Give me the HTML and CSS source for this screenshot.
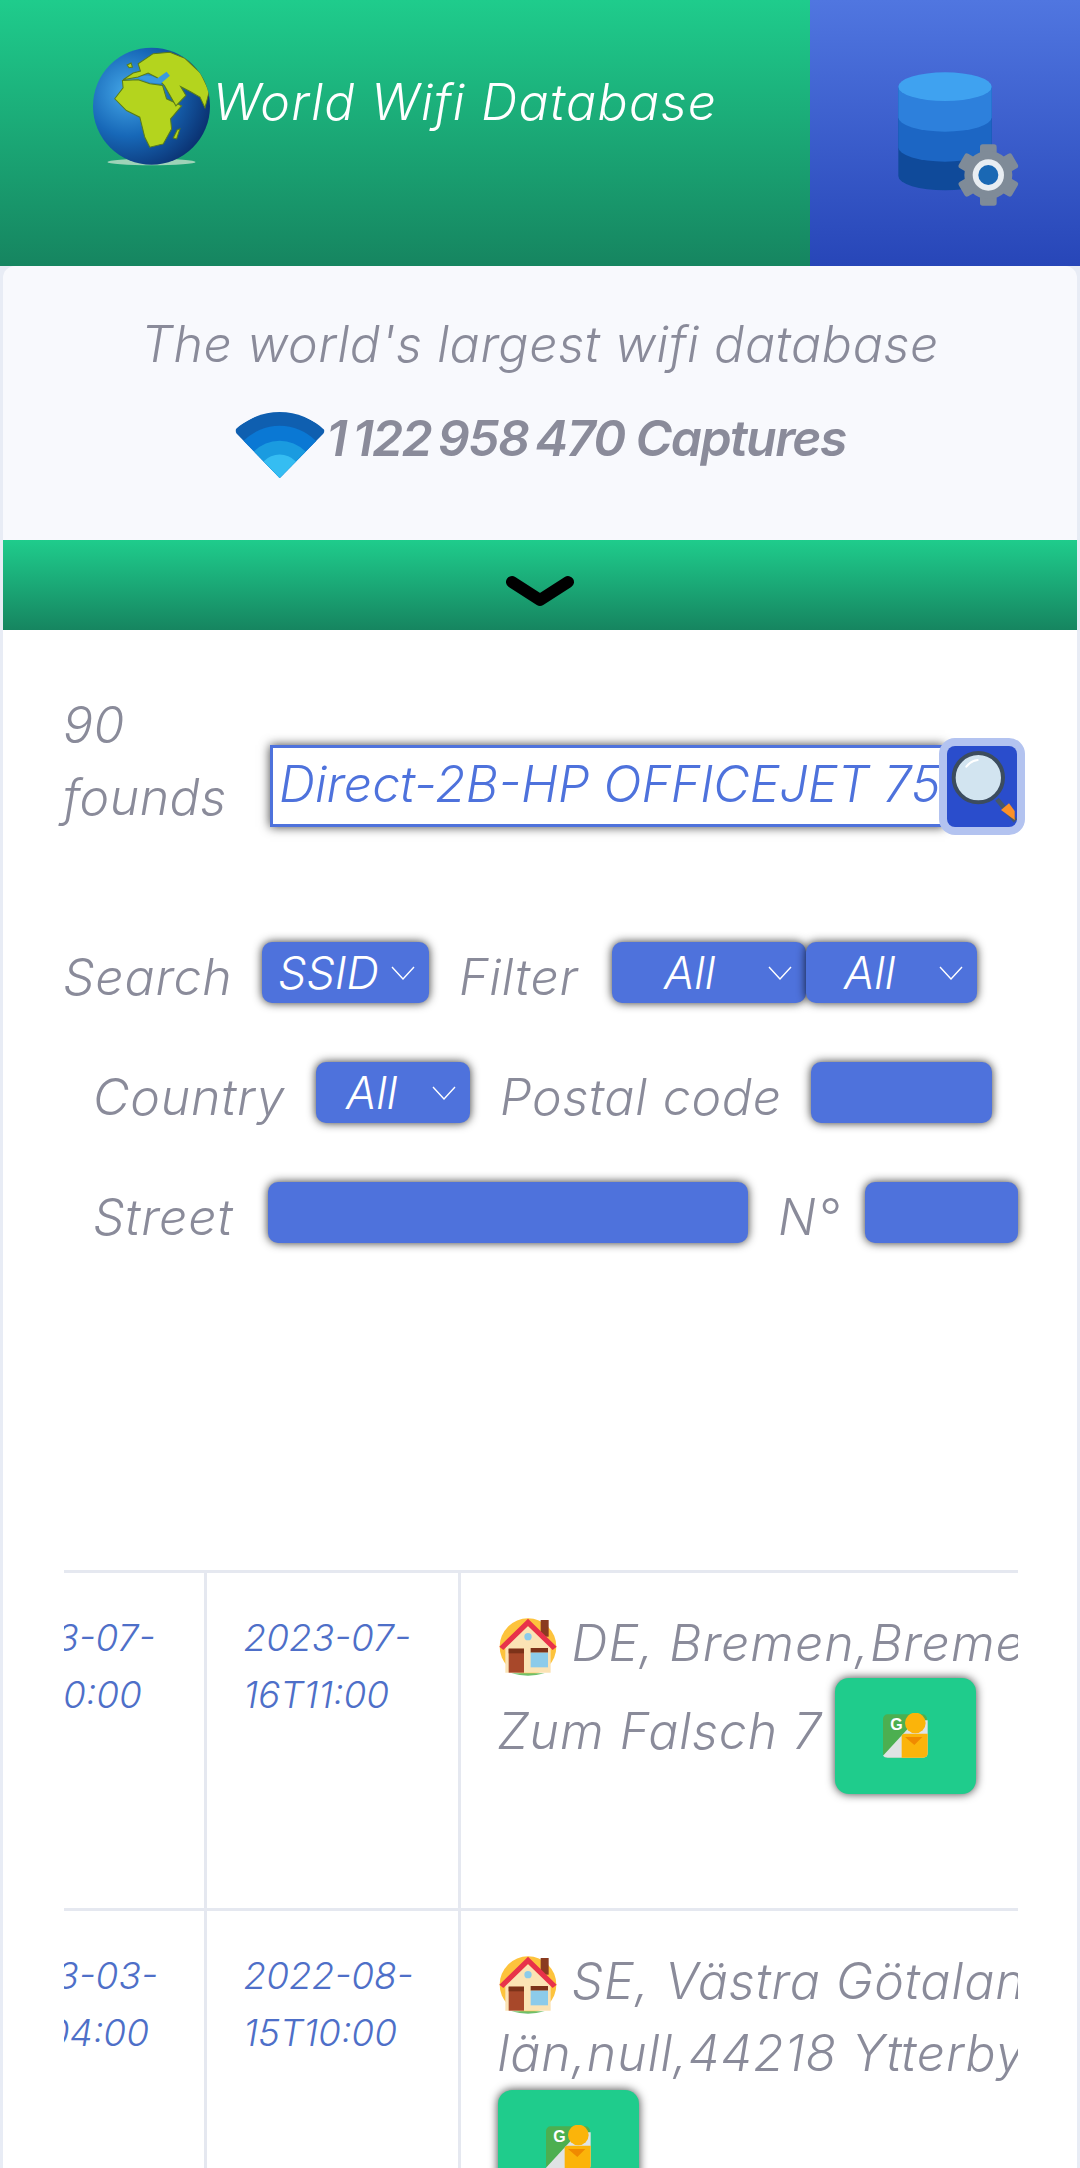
FILE: index.html
```html
<!DOCTYPE html>
<html lang="en">
<head>
  <meta charset="UTF-8">
  <meta name="viewport" content="width=device-width, initial-scale=1.0">
  <title>World Wifi Database</title>
  <link rel="stylesheet" href="styles.css">
</head>
<body>
  <!-- shared icons -->
  <svg class="defs" width="0" height="0">
    <symbol id="house" viewBox="0 0 180 180">
      <circle cx="90" cy="92" r="85" fill="#fdc33c"/>
      <rect x="128" y="12" width="24" height="50" fill="#8a3b20"/>
      <path d="M90 30 L158 92 V170 H22 V92 Z" fill="#fbe3b4"/>
      <path d="M4 92 L90 8 L176 92 L164 102 L90 30 L16 102 Z" fill="#e8324a"/>
      <circle cx="90" cy="62" r="11" fill="#8ccbea"/>
      <rect x="32" y="98" width="46" height="72" fill="#a8482a"/>
      <rect x="32" y="98" width="46" height="14" fill="#7c3219"/>
      <rect x="98" y="96" width="52" height="14" fill="#7c3219"/>
      <rect x="98" y="110" width="52" height="44" fill="#8ccbea"/>
      <path d="M40 172 Q90 186 140 172 Z" fill="#6fbf6a"/>
    </symbol>
    <symbol id="maps" viewBox="0 0 135 138">
      <rect x="0" y="4" width="132" height="130" rx="14" fill="#4caf50"/>
      <path d="M0 128 L98 22 H134 V120 Q134 134 120 134 H14 Q4 134 0 128 Z" fill="#dfe3e4"/>
      <path d="M56 134 V70 Q56 62 66 62 H134 V120 Q134 134 120 134 Z" fill="#fbb40a"/>
      <path d="M66 72 H118 L94 96 Z" fill="#f08a00"/>
      <circle cx="97" cy="30" r="31" fill="#fbb40a"/>
      <text x="22" y="50" class="maps-g">G</text>
    </symbol>
  </svg>

  <div class="page">
    <header class="top">
      <div class="brand">
        <svg class="globe" viewBox="70 50 350 356">
          <defs>
            <radialGradient id="sea" cx="30%" cy="38%" r="75%">
              <stop offset="0" stop-color="#45a8e8"/>
              <stop offset=".5" stop-color="#1768b8"/>
              <stop offset="1" stop-color="#0a2f6e"/>
            </radialGradient>
            <clipPath id="ball"><circle cx="245" cy="227" r="175"/></clipPath>
          </defs>
          <ellipse cx="245" cy="394" rx="132" ry="10" fill="#9ed3b8"/>
          <circle cx="245" cy="227" r="175" fill="url(#sea)"/>
          <g clip-path="url(#ball)" fill="#b4d41e" stroke="#5a7c18" stroke-width="3">
            <path d="M135 205 L160 172 L158 150 L205 148 L240 160 L278 165 L290 205 L335 226 L302 265 L305 295 L280 340 L240 350 L225 320 L210 260 L170 240 Z"/>
            <path d="M160 148 L190 128 L212 122 L205 100 L250 70 L300 66 L345 84 L392 128 L418 182 L405 232 L390 200 L362 184 L332 168 L348 195 L318 226 L284 166 L262 142 L235 128 L205 140 Z"/>
            <path d="M322 298 L330 295 L320 325 L310 322 Z"/>
            <path d="M172 104 L184 98 L188 110 L178 112 Z"/>
          </g>
          <path d="M205 142 Q235 128 262 144 L290 124 L300 136 L272 160 L240 156 Z" fill="#3a9ae0"/>
        </svg>
        <h1 class="brand-name">World Wifi Database</h1>
      </div>
      <div class="admin">
        <svg class="db-icon" viewBox="0 0 540 510">
          <path d="M85 110 V378 A140 43 0 0 0 365 378 V110 Z" fill="#0f4a9a"/>
          <path d="M85 110 V292 A140 43 0 0 0 365 292 V110 Z" fill="#1c66c4"/>
          <path d="M85 110 V202 A140 43 0 0 0 365 202 V110 Z" fill="#2d80dc"/>
          <ellipse cx="225" cy="110" rx="140" ry="43" fill="#3fa2f0"/>
          <g fill="#7f8b98">
            <rect x="330" y="283" width="50" height="184" rx="8"/>
            <rect x="330" y="283" width="50" height="184" rx="8" transform="rotate(60 355 375)"/>
            <rect x="330" y="283" width="50" height="184" rx="8" transform="rotate(120 355 375)"/>
            <circle cx="355" cy="375" r="72"/>
          </g>
          <circle cx="355" cy="375" r="47" fill="#e8edf2"/>
          <circle cx="355" cy="375" r="30" fill="#1a68b4"/>
        </svg>
      </div>
    </header>

    <section class="intro">
      <p class="tagline">The world's largest wifi database</p>
      <p class="captures">
        <svg class="wifi-icon" viewBox="45 65 276 206">
          <defs>
            <clipPath id="sector"><path d="M182 268 L52 134 Q44 124 54 112 L182 40 L312 112 Q322 124 314 134 Z"/></clipPath>
          </defs>
          <g clip-path="url(#sector)">
            <circle cx="182" cy="265" r="197" fill="#0f5fb0"/>
            <circle cx="182" cy="265" r="155" fill="#0a78d4"/>
            <circle cx="182" cy="265" r="110" fill="#1a9be0"/>
            <circle cx="182" cy="265" r="68" fill="#35bdf2"/>
          </g>
        </svg>
        <span>1&#8201;122&#8201;958&#8201;470 Captures</span>
      </p>
    </section>

    <div class="toggle">
      <svg class="chevron" viewBox="0 0 70 32"><path d="M7 7 L35 25 L63 7" fill="none" stroke="#000" stroke-width="12" stroke-linecap="round" stroke-linejoin="round"/></svg>
    </div>

    <main class="content">
      <div class="search-row">
        <div class="count">90<br>founds</div>
        <div class="search-input">Direct-2B-HP OFFICEJET 75</div>
        <button class="search-btn">
          <svg viewBox="0 0 210 243">
            <path d="M150 160 L205 225" stroke="#47586a" stroke-width="14"/>
            <path d="M162 192 L186 172 L203 195 V222 Z" fill="#fb9128"/>
            <circle cx="94" cy="95" r="74" fill="#d2e4f0" stroke="#3c4c5e" stroke-width="12"/>
            <path d="M58 62 Q72 44 92 42" fill="none" stroke="#fff" stroke-width="6" stroke-linecap="round"/>
          </svg>
        </button>
      </div>

      <div class="filter-row">
        <span class="lbl w-search">Search</span>
        <div class="ctl sel w-ssid">SSID <svg class="caret" viewBox="0 0 24 14"><path d="M1 1 L12 13 L23 1" fill="none" stroke="#fff" stroke-width="1.4"/></svg></div>
        <span class="lbl w-filter">Filter</span>
        <div class="ctl sel w-all1"><span>All</span><svg class="caret" viewBox="0 0 24 14"><path d="M1 1 L12 13 L23 1" fill="none" stroke="#fff" stroke-width="1.4"/></svg></div>
        <div class="ctl sel w-all2"><span>All</span><svg class="caret" viewBox="0 0 24 14"><path d="M1 1 L12 13 L23 1" fill="none" stroke="#fff" stroke-width="1.4"/></svg></div>
      </div>

      <div class="filter-row indent">
        <span class="lbl w-country">Country</span>
        <div class="ctl sel w-all3"><span>All</span><svg class="caret" viewBox="0 0 24 14"><path d="M1 1 L12 13 L23 1" fill="none" stroke="#fff" stroke-width="1.4"/></svg></div>
        <span class="lbl w-postal">Postal code</span>
        <div class="ctl w-zip"></div>
      </div>

      <div class="filter-row indent">
        <span class="lbl w-street">Street</span>
        <div class="ctl w-road"></div>
        <span class="lbl w-no">N°</span>
        <div class="ctl w-num"></div>
      </div>

      <div class="results">
        <table class="grid">
          <tr>
            <td class="date">2023-07-<br>16T10:00</td>
            <td class="date">2023-07-<br>16T11:00</td>
            <td class="addr">
              <div class="line first"><svg class="house"><use href="#house"/></svg>DE, Bremen,Bremen</div>
              <div class="line second">Zum Falsch 7<button class="map-btn"><svg class="map-icon"><use href="#maps"/></svg></button></div>
            </td>
          </tr>
          <tr>
            <td class="date">2023-03-<br>15T04:00</td>
            <td class="date">2022-08-<br>15T10:00</td>
            <td class="addr">
              <div class="line first"><svg class="house"><use href="#house"/></svg>SE, Västra Götaland</div>
              <div class="line plain">län,null,44218 Ytterbyvägen</div>
              <button class="map-btn left"><svg class="map-icon"><use href="#maps"/></svg></button>
            </td>
          </tr>
        </table>
      </div>
    </main>
  </div>
</body>
</html>
```

FILE: styles.css
```css
html, body {
  margin: 0;
  height: 100%;
  background: #e8ecf5;
  font-family: Inter, "Liberation Sans", sans-serif;
  font-style: italic;
  font-weight: 300;
  color: #8a8b9a;
}

.defs {
  position: absolute;
}

.page {
  height: 100vh;
  overflow: hidden;
}

/* header */
.top {
  display: flex;
  height: 266px;
}
.brand {
  width: 810px;
  display: flex;
  padding: 47px 0 0 93px;
  box-sizing: border-box;
  background: linear-gradient(to bottom, #1fcc8c, #168560);
}
.globe {
  width: 117px;
  height: 119px;
}
.brand-name {
  margin: 0 0 0 3px;
  font-size: 50px;
  font-weight: 300;
  line-height: 110px;
  height: 110px;
  color: #fff;
  letter-spacing: 1.4px;
  white-space: nowrap;
}
.admin {
  flex: 1;
  padding: 50px 0 0 60px;
  background: linear-gradient(to bottom, #5076e0, #2746b8);
}
.db-icon {
  width: 180px;
  height: 170px;
}

/* panel under the header */
.intro {
  margin: 0 3px;
  height: 274px;
  box-sizing: border-box;
  padding-top: 48px;
  background: #f8f9fd;
  border-radius: 12px 12px 0 0;
  text-align: center;
}
.tagline {
  margin: 0;
  font-size: 50px;
  line-height: 60px;
  letter-spacing: .7px;
}
.captures {
  margin: 29px 0 0;
  display: flex;
  justify-content: center;
  align-items: center;
  font-size: 50px;
  font-weight: 600;
  line-height: 70px;
  letter-spacing: -1.6px;
}
.captures span {
  padding-bottom: 14px;
}
.wifi-icon {
  width: 92px;
  height: 68px;
}
.toggle {
  margin: 0 3px;
  height: 90px;
  display: flex;
  justify-content: center;
  padding-top: 35px;
  box-sizing: border-box;
  background: linear-gradient(to bottom, #1fcc8c, #168560);
}
.chevron {
  width: 70px;
  height: 32px;
}

/* search form */
.content {
  margin: 0 3px;
  padding: 59px 0 0 60px;
  height: 1538px;
  box-sizing: border-box;
  background: #fff;
}
.search-row {
  display: flex;
  align-items: flex-end;
}
.count {
  width: 207px;
  font-size: 50px;
  line-height: 72px;
  letter-spacing: .5px;
}
.search-input {
  width: 675px;
  height: 82px;
  margin-bottom: 6px;
  box-sizing: border-box;
  border: 3px solid #4e72dc;
  padding-left: 6px;
  overflow: hidden;
  font-size: 50px;
  line-height: 72px;
  white-space: nowrap;
  color: #4e72dc;
  background: #fff;
  box-shadow: 0 0 10px rgba(0, 0, 0, .75);
}
.search-btn {
  width: 70px;
  height: 81px;
  margin: 0 0 6px 2px;
  padding: 0;
  border: 0;
  border-radius: 8px;
  background: #2a4dcc;
  box-shadow: 0 0 0 8px #b3c3f0;
  position: relative;
}
.search-btn svg {
  display: block;
  width: 70px;
  height: 81px;
}

.filter-row {
  display: flex;
  align-items: center;
  height: 61px;
  margin-top: 59px;
}
.filter-row:nth-child(2) {
  margin-top: 109px;
}
.indent {
  padding-left: 30px;
}
.lbl {
  padding-top: 10px;
  font-size: 50px;
  line-height: 51px;
  letter-spacing: .8px;
  white-space: nowrap;
}
.ctl {
  height: 61px;
  box-sizing: border-box;
  border-radius: 10px;
  background: #4e72dc;
  box-shadow: 0 0 10px rgba(0, 0, 0, .8);
}
.sel {
  display: flex;
  align-items: center;
  font-size: 45px;
  color: #fff;
  position: relative;
}
.caret {
  width: 24px;
  height: 14px;
  position: absolute;
  right: 14px;
  top: 24px;
}

/* column widths, the form has no common grid */
.w-search { width: 199px; }
.w-ssid { width: 167px; padding-left: 16px; }
.w-filter { width: 153px; margin-left: 30px; }
.w-all1 { width: 194px; padding-left: 52px; }
.w-all2 { width: 171px; padding-left: 38px; }
.w-country { width: 223px; }
.w-all3 { width: 154px; padding-left: 30px; }
.w-postal { width: 311px; margin-left: 30px; }
.w-zip { width: 181px; }
.w-street { width: 175px; }
.w-road { width: 480px; }
.w-no { width: 87px; margin-left: 30px; }
.w-num { width: 153px; }

/* results table, scrolled sideways */
.results {
  width: 954px;
  margin-top: 327px;
  margin-left: 1px;
  overflow: hidden;
}
.grid {
  margin-left: -113px;
  border-collapse: collapse;
  table-layout: fixed;
  width: 1400px;
}
.grid td {
  box-sizing: border-box;
  vertical-align: top;
  border-top: 3px solid #e5e8f0;
  border-left: 3px solid #e5e8f0;
  height: 338px;
  white-space: nowrap;
}
.grid td:first-child {
  border-left: 0;
}
.date {
  width: 254px;
  padding: 36px 0 0 37px;
  font-size: 37px;
  line-height: 57px;
  color: #4e6fc8;
}
.addr {
  padding: 42px 0 0 37px;
  font-size: 50px;
  letter-spacing: 1px;
}
.line {
  display: flex;
}
.first {
  height: 62px;
  line-height: 56px;
}
.second {
  height: 116px;
  line-height: 108px;
}
.plain {
  height: 70px;
  line-height: 76px;
}
.house {
  width: 60px;
  height: 62px;
  margin-right: 14px;
}
.map-btn {
  display: block;
  width: 141px;
  height: 116px;
  margin: 1px 0 0 13px;
  padding: 0;
  border: 0;
  border-radius: 14px;
  background: #1fcc8c;
  box-shadow: 0 0 10px rgba(0, 0, 0, .75);
}
.map-btn.left {
  margin: 5px 0 0;
}
.map-icon {
  display: block;
  width: 45px;
  height: 46px;
  margin: 0 auto;
}
.maps-g {
  font-family: "Liberation Sans", sans-serif;
  font-style: normal;
  font-weight: 700;
  font-size: 48px;
  fill: #fff;
}
```
